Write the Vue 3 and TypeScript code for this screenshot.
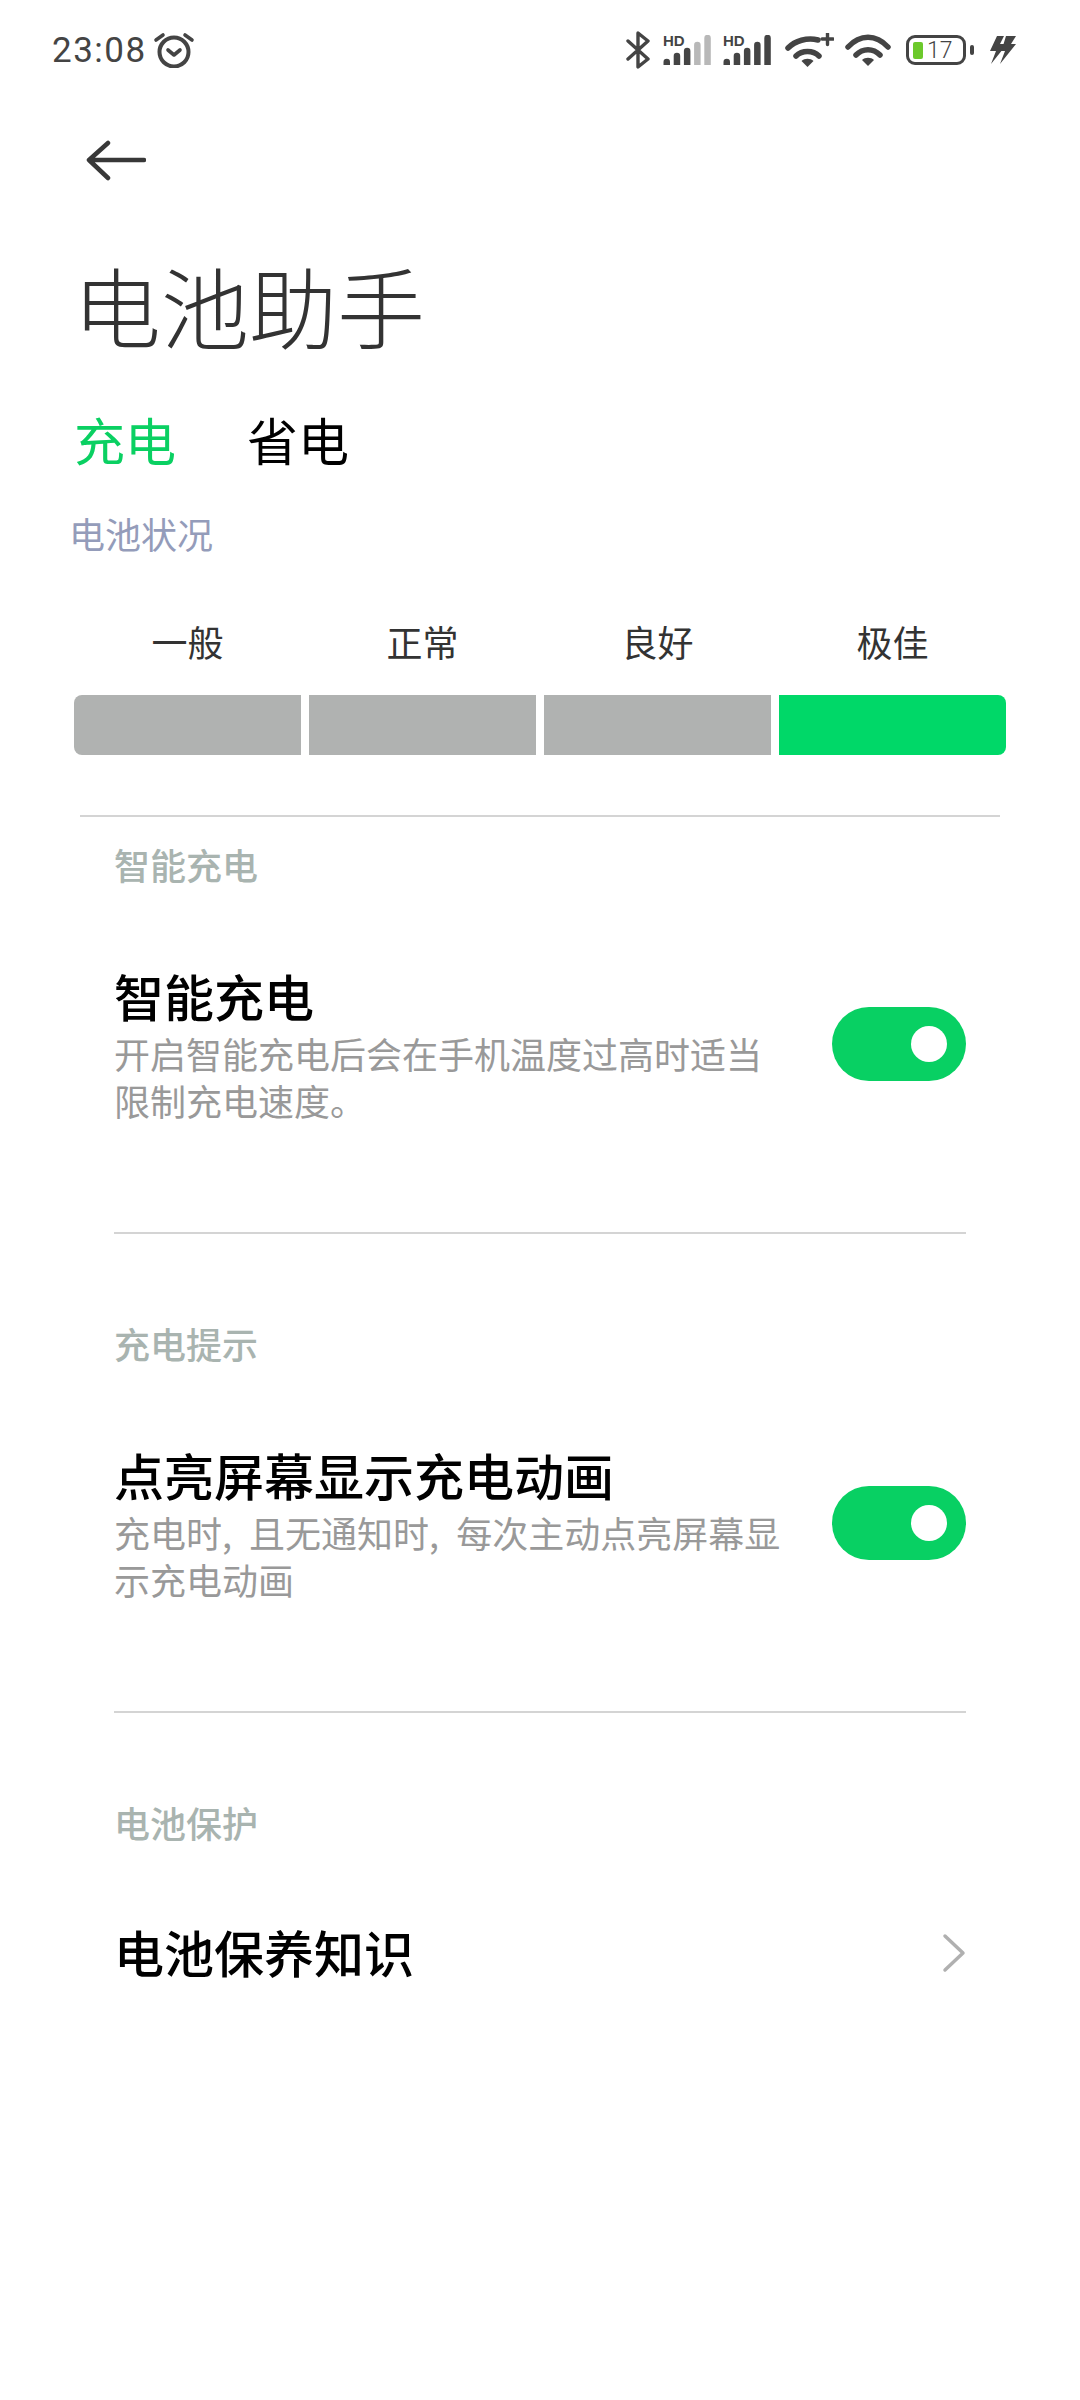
<template>
  <div class="page">
    <div class="status">
      <div class="status-left">
        <span class="clock">23:08</span>
        <svg class="alarm" width="42" height="36" viewBox="0 0 42 36" fill="none" stroke="#444" stroke-linecap="round">
          <circle cx="21" cy="20" r="14.500" stroke-width="4" />
          <path d="M15 18l6 5 6-5" stroke-width="3.600" stroke-linejoin="round" />
          <path d="M3 8l7-5M39 8l-7-5" stroke-width="3.600" />
        </svg>
      </div>
      <div class="status-right">
        <svg class="bt" width="24" height="38" viewBox="0 0 24 38" fill="none" stroke="#444" stroke-width="3.400" stroke-linejoin="round" stroke-linecap="round">
          <path d="M2 10l20 18-10 8V2l10 8L2 28" />
        </svg>
        <div class="signal first">
          <span class="hd">HD</span>
          <svg width="49" height="30" viewBox="0 0 49 30">
            <path v-for="(b, i) in weakBars" :key="i" :d="b.d" :fill="b.fill" />
          </svg>
        </div>
        <div class="signal">
          <span class="hd">HD</span>
          <svg width="49" height="30" viewBox="0 0 49 30">
            <path v-for="(b, i) in fullBars" :key="i" :d="b.d" :fill="b.fill" />
          </svg>
        </div>
        <svg class="wifi-plus" width="49" height="34" viewBox="0 0 49 34" fill="none" stroke="#444" stroke-width="5.500" stroke-linecap="round">
          <path d="M3 15C10 8 22 4 33 7" />
          <path d="M11 23c6-6 17-6 23 0" />
          <path d="M22.500 34l-6-6c3-3 9-3 12 0z" fill="#444" stroke="none" />
          <path d="M37 6h11M42.500 0.500v11" stroke-width="3.400" />
        </svg>
        <svg class="wifi" width="46" height="32" viewBox="0 0 46 32" fill="none" stroke="#444" stroke-width="5.500" stroke-linecap="round">
          <path d="M3 13C15 0 31 0 43 13" />
          <path d="M11 21c7-7 17-7 24 0" />
          <path d="M23 32l-6-6c3-3 9-3 12 0z" fill="#444" stroke="none" />
        </svg>
        <div class="battery">
          <div class="battery-body">
            <span class="battery-fill"></span>
            <span class="battery-num">17</span>
          </div>
          <span class="battery-cap"></span>
        </div>
        <svg class="bolt" width="27" height="28" viewBox="0 0 27 28" fill="#444">
          <path d="M8 0h7l-4 8h7L2 28l5-13H1z" />
          <path d="M17 0h10l-5 8h5L11 28l5-13h-6l3-2z" />
        </svg>
      </div>
    </div>

    <div class="back">
      <svg width="60" height="44" viewBox="0 0 60 44" fill="none" stroke="#383838" stroke-width="4.500" stroke-linecap="round" stroke-linejoin="round">
        <path d="M3 22h55M22 5L3 22l19 18" />
      </svg>
    </div>

    <h1 class="title">电池助手</h1>

    <div class="tabs">
      <span class="tab active">充电</span>
      <span class="tab">省电</span>
    </div>

    <div class="status-label">电池状况</div>

    <div class="levels">
      <div v-for="l in levels" :key="l.name" class="level">
        <span class="level-name">{{ l.name }}</span>
        <span class="level-bar" :class="{ on: l.on }"></span>
      </div>
    </div>

    <div class="sections">
      <section v-for="s in sections" :key="s.head" class="section">
        <div class="section-head">{{ s.head }}</div>
        <div class="row" :class="{ link: !s.desc }">
          <div class="row-text">
            <div class="row-title">{{ s.title }}</div>
            <div v-if="s.desc" class="row-desc">{{ s.desc }}</div>
          </div>
          <span v-if="s.desc" class="switch"><span class="knob"></span></span>
          <svg v-else width="24" height="40" viewBox="0 0 24 40" fill="none" stroke="#b0b0b0" stroke-width="3.500" stroke-linecap="round" stroke-linejoin="round">
            <path d="M3 3l18 17L3 37" />
          </svg>
        </div>
      </section>
    </div>
  </div>
</template>

<script setup lang="ts">
const bar = (x: number, h: number) => `M${x} ${30 - h + 3}a3.250 3.250 0 0 1 6.500 0V30h-6.500z`

const heights = [6, 12, 17, 23, 30]
const weakBars = heights.map((h, i) => ({ d: bar(0.5 + i * 10.2, h), fill: i < 3 ? '#444' : '#b8b8b8' }))
const fullBars = heights.map((h, i) => ({ d: bar(0.5 + i * 10.2, h), fill: '#444' }))

const levels = [
  { name: '一般', on: false },
  { name: '正常', on: false },
  { name: '良好', on: false },
  { name: '极佳', on: true },
]

const sections = [
  { head: '智能充电', title: '智能充电', desc: '开启智能充电后会在手机温度过高时适当限制充电速度。' },
  { head: '充电提示', title: '点亮屏幕显示充电动画', desc: '充电时, 且无通知时, 每次主动点亮屏幕显示充电动画' },
  { head: '电池保护', title: '电池保养知识', desc: '' },
]
</script>

<style>
body {
  background: #fff;
}
</style>

<style scoped>
.page {
  width: 1080px;
  height: 2400px;
  overflow: hidden;
  background: #fff;
  font-family: "Noto Sans CJK SC", "Noto Sans", sans-serif;
}

.status {
  height: 50px;
  padding: 25px 64px 0 52px;
  display: flex;
  justify-content: space-between;
  align-items: center;
}

.status-left,
.status-right {
  display: flex;
  align-items: center;
}

.clock {
  font-family: Roboto, sans-serif;
  font-size: 35px;
  letter-spacing: 1.500px;
  color: #444;
}

.alarm {
  margin-left: 6px;
}

.signal {
  position: relative;
  width: 49px;
  height: 30px;
  margin-left: 11px;
}

.signal.first {
  margin-left: 13px;
}

.signal svg {
  display: block;
}

.hd {
  position: absolute;
  left: 0;
  top: 0;
  font: 700 15px/11px "Liberation Sans", sans-serif;
  color: #444;
}

.wifi-plus {
  margin-left: 13px;
}

.wifi {
  margin-left: 11px;
}

.battery {
  display: flex;
  align-items: center;
  gap: 4px;
  margin-left: 15px;
}

.battery-body {
  width: 60px;
  height: 30px;
  box-sizing: border-box;
  border: 3.500px solid #444;
  border-radius: 9px;
  display: flex;
  align-items: center;
  padding-left: 4px;
  gap: 4px;
}

.battery-fill {
  width: 10px;
  height: 17px;
  border-radius: 2px;
  background: #6cc92b;
}

.battery-num {
  font-family: Roboto, sans-serif;
  font-size: 23px;
  font-weight: 300;
  line-height: 1;
  color: #444;
}

.battery-cap {
  width: 4px;
  height: 10px;
  border-radius: 2px;
  background: #444;
}

.bolt {
  margin-left: 15px;
}

.back {
  margin: 63px 0 0 86px;
  height: 44px;
}

.title {
  margin: 64px 0 0 73px;
  font-size: 88px;
  font-weight: 300;
  line-height: 116px;
  color: #333;
}

.tabs {
  display: flex;
  gap: 71px;
  margin: 41px 0 0 74px;
}

.tab {
  font-size: 51px;
  line-height: 72px;
  color: #000;
}

.tab.active {
  color: #0ad062;
}

.status-label {
  margin: 33px 0 0 69px;
  font-size: 36px;
  line-height: 50px;
  color: #949cba;
}

.levels {
  display: flex;
  gap: 8px;
  margin: 58px 0 0 74px;
  width: 932px;
}

.level {
  flex: 1;
  display: flex;
  flex-direction: column;
  align-items: center;
  gap: 29px;
}

.level-name {
  font-size: 36px;
  line-height: 50px;
  color: #333;
}

.level-bar {
  width: 100%;
  height: 60px;
  background: #b0b2b1;
}

.level:first-child .level-bar {
  border-radius: 8px 0 0 8px;
}

.level:last-child .level-bar {
  border-radius: 0 8px 8px 0;
}

.level-bar.on {
  background: #00d868;
}

.sections {
  margin: 60px 40px 0 80px;
  width: 920px;
  border-top: 2px solid #d4d4d4;
}

.section {
  margin: 0 34px;
  padding: 24px 0 108px;
}

.section + .section {
  border-top: 2px solid #d4d4d4;
  padding-top: 86px;
}

.section-head {
  font-size: 36px;
  font-weight: 500;
  line-height: 47px;
  padding-bottom: 3px;
  color: #a9b4b0;
}

.row {
  display: flex;
  justify-content: space-between;
  align-items: center;
  margin-top: 73px;
}

.row-text {
  width: 680px;
}

.row-title {
  font-size: 50px;
  font-weight: 500;
  line-height: 62px;
  margin-bottom: 4px;
  color: #000;
}

.row-desc {
  font-size: 36px;
  line-height: 47px;
  word-spacing: 9px;
  color: #999;
}

.switch {
  width: 134px;
  height: 74px;
  border-radius: 37px;
  background: #08d063;
  display: flex;
  align-items: center;
  justify-content: flex-end;
  padding-right: 19px;
  box-sizing: border-box;
}

.knob {
  width: 36px;
  height: 36px;
  border-radius: 50%;
  background: #fff;
}

.row.link {
  margin-top: 71px;
}
</style>
